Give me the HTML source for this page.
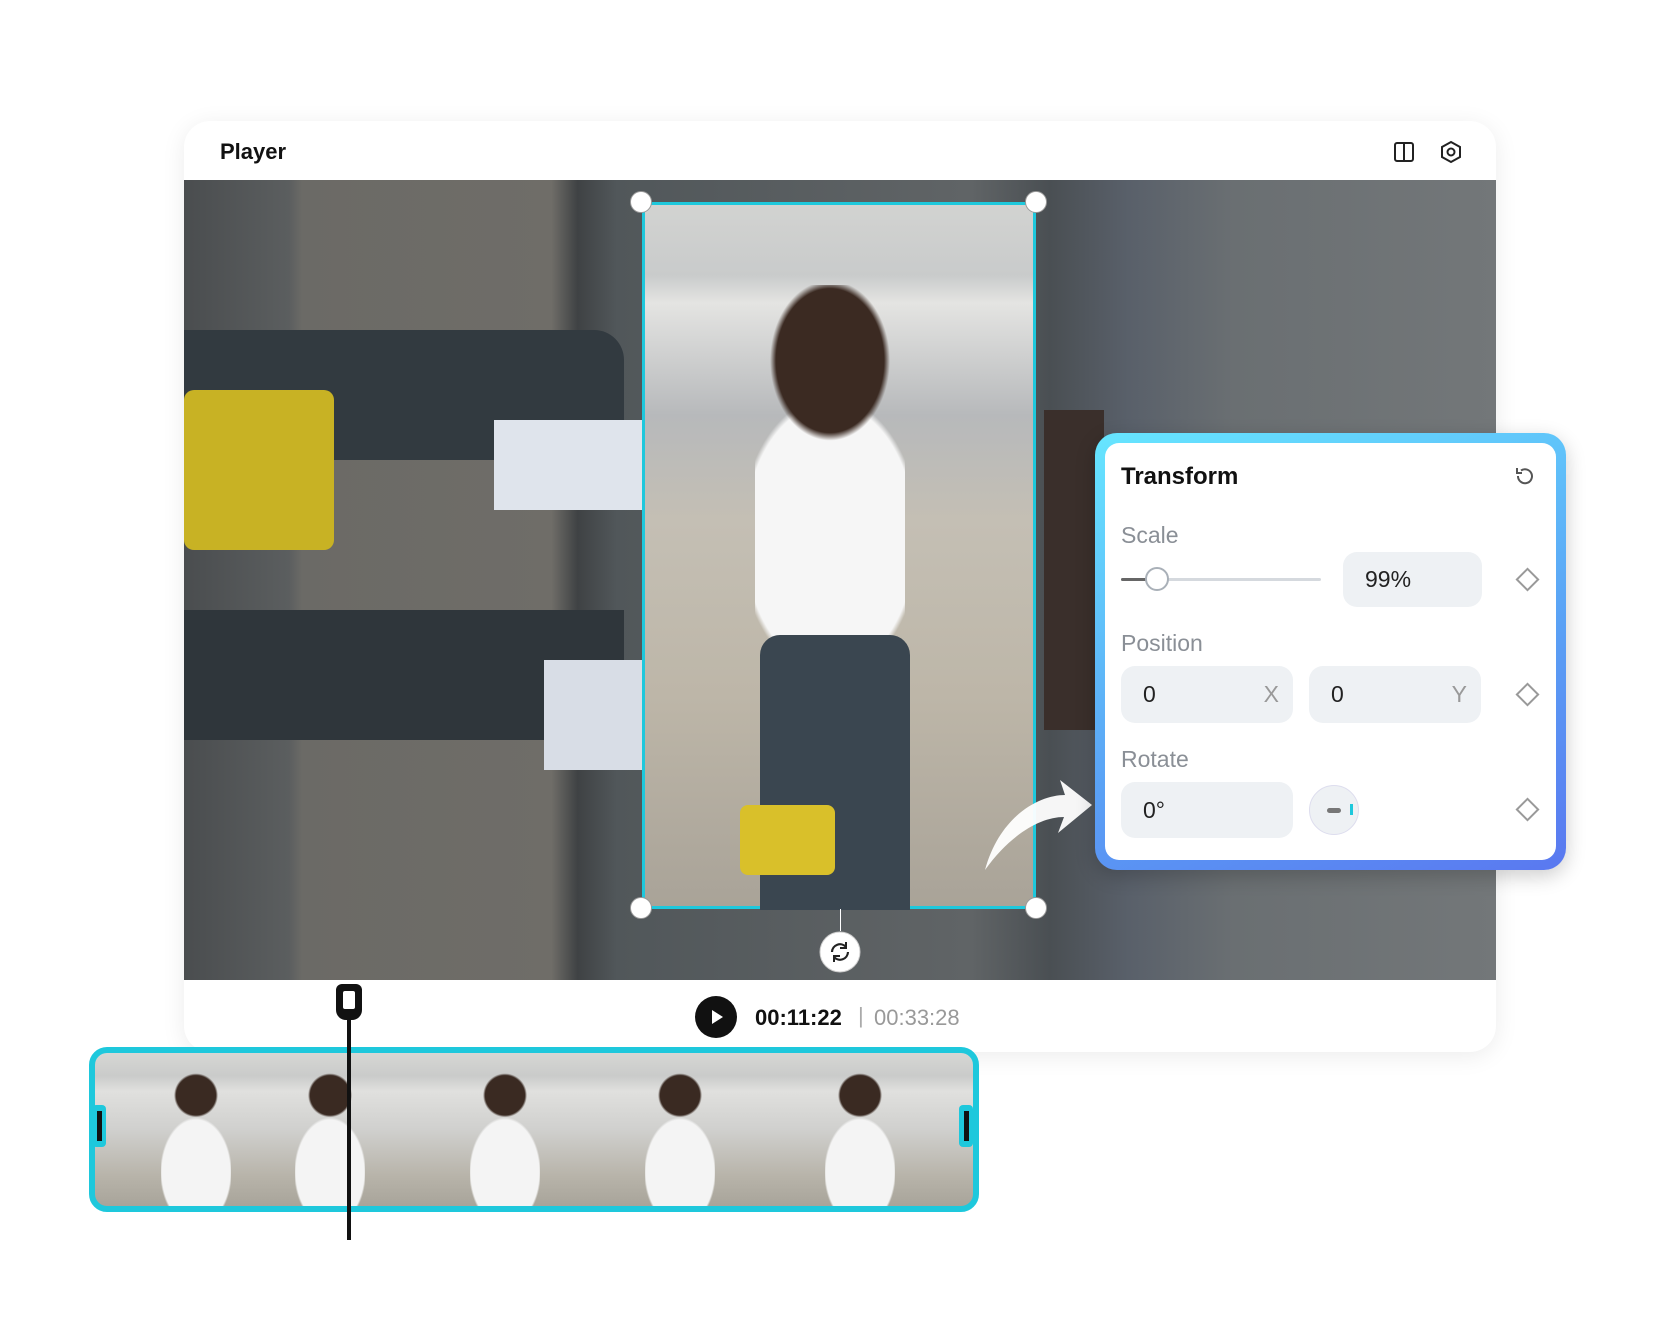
<!DOCTYPE html>
<html><head><meta charset="utf-8"><style>
*{margin:0;padding:0;box-sizing:border-box}
body{width:1680px;height:1344px;background:#fff;position:relative;overflow:hidden;font-family:"Liberation Sans",sans-serif}
.card{position:absolute;left:184px;top:121px;width:1312px;height:931px;background:#fff;border-radius:26px;box-shadow:0 4px 24px rgba(0,0,0,.08);overflow:hidden}
.title{position:absolute;left:36px;top:18px;font-size:22px;font-weight:bold;color:#111}
.scene{position:absolute;left:0;top:59px;width:1312px;height:800px;background:
linear-gradient(90deg,#4a4d4f 0,#5b5e5f 8%,#6b6a66 9%,#6f6d68 28%,#3f4244 30%,#51575a 33%,#606466 60%,#4a4f53 66%,#59606a 72%,#6a6f72 80%,#737779 100%)}
.dark{position:absolute;background:#2d3236}
.sel{position:absolute;left:642px;top:202px;width:394px;height:707px;border:3px solid #1ec8dc;background:
linear-gradient(180deg,#d2d3d1 0,#c9cbcb 10%,#e4e4e2 14%,#b7b9bb 30%,#c4bfb4 45%,#bdb6a8 70%,#a9a398 100%)}
.h{position:absolute;width:22px;height:22px;border-radius:50%;background:#fff;border:1px solid #999}
.panel{position:absolute;left:1095px;top:433px;width:471px;height:437px;border-radius:22px;background:linear-gradient(160deg,#66e6ff,#5aa0f5 60%,#5a78f0);padding:10px;box-shadow:0 6px 20px rgba(0,0,0,.2)}
.pin{width:100%;height:100%;background:#fff;border-radius:14px;position:relative}
.lbl{position:absolute;left:16px;font-size:23px;color:#8a8f96}
.inp{position:absolute;background:#eef1f4;border-radius:14px;font-size:23px;color:#222;padding-left:22px;display:flex;align-items:center}
.dia{position:absolute;width:17px;height:17px;border:2px solid #999;transform:rotate(45deg)}
.strip{position:absolute;left:89px;top:1047px;width:890px;height:165px;border:6px solid #1ec8dc;border-radius:18px;background:
linear-gradient(180deg,#d6d7d4 0,#cacbca 15%,#e0e0de 25%,#d0d0ce 50%,#b8b4aa 80%,#a8a49a 100%);overflow:hidden}
.fig{position:absolute;top:18px;width:70px;height:135px;background:radial-gradient(ellipse 22px 22px at 50% 18%,#3a2a22 90%,transparent 100%),radial-gradient(ellipse 36px 55px at 50% 75%,#f4f4f4 95%,transparent 100%)}
</style></head><body>
<div class="card">
<div class="title">Player</div>
<svg style="position:absolute;left:1209px;top:20px" width="22" height="22" viewBox="0 0 22 22"><rect x="2" y="2" width="18" height="18" rx="2" fill="none" stroke="#222" stroke-width="2"/><line x1="11" y1="2" x2="11" y2="20" stroke="#222" stroke-width="2"/></svg>
<svg style="position:absolute;left:1255px;top:19px" width="24" height="24" viewBox="0 0 24 24"><path d="M12 2 L21 7 L21 17 L12 22 L3 17 L3 7Z" fill="none" stroke="#222" stroke-width="2"/><circle cx="12" cy="12" r="3.5" fill="none" stroke="#222" stroke-width="2"/></svg>
<div class="scene">
<div class="dark" style="left:0;top:150px;width:440px;height:130px;background:#323a40;border-radius:0 30px 30px 0"></div>
<div class="dark" style="left:0;top:430px;width:440px;height:130px;background:#2f363b"></div>
<div style="position:absolute;left:0;top:210px;width:150px;height:160px;background:#c8b224;border-radius:10px"></div>
<div style="position:absolute;left:310px;top:240px;width:150px;height:90px;background:#dfe4ec"></div>
<div style="position:absolute;left:360px;top:480px;width:100px;height:110px;background:#d8dde6"></div>
<div style="position:absolute;left:860px;top:230px;width:60px;height:320px;background:#3a2f2b"></div>
</div>
<svg style="position:absolute;left:510px;top:874px" width="44" height="44"><circle cx="22" cy="22" r="21" fill="#111"/><path d="M18 15 L29 22 L18 29Z" fill="#fff"/></svg>
<div style="position:absolute;left:571px;top:884px;font-size:22px;font-weight:bold;color:#111">00:11:22</div>
<div style="position:absolute;left:674px;top:882px;font-size:22px;color:#aaa">|</div>
<div style="position:absolute;left:690px;top:884px;font-size:22px;color:#999">00:33:28</div>
</div>
<div class="sel">
<div style="position:absolute;left:110px;top:80px;width:150px;height:420px;background:radial-gradient(ellipse 60px 80px at 50% 18%,#3b2a22 90%,transparent 100%),radial-gradient(ellipse 90px 140px at 50% 60%,#f6f6f6 95%,transparent 100%)"></div>
<div style="position:absolute;left:115px;top:430px;width:150px;height:275px;background:#3a4650;border-radius:20px 20px 0 0"></div>
<div style="position:absolute;left:95px;top:600px;width:95px;height:70px;background:#d9c02a;border-radius:8px"></div>
</div>
<div class="h" style="left:630px;top:191px"></div><div class="h" style="left:1025px;top:191px"></div>
<div class="h" style="left:630px;top:897px"></div><div class="h" style="left:1025px;top:897px"></div>
<div style="position:absolute;left:840px;top:909px;width:1px;height:22px;background:#fff"></div>
<svg style="position:absolute;left:818px;top:930px" width="44" height="44"><circle cx="22" cy="22" r="20" fill="#fff" stroke="#ccc"/><path d="M14 22 A8 8 0 0 1 28 17 M30 22 A8 8 0 0 1 16 27" fill="none" stroke="#222" stroke-width="2.2"/><path d="M28 12 L28 18 L22 18" fill="none" stroke="#222" stroke-width="2"/><path d="M16 32 L16 26 L22 26" fill="none" stroke="#222" stroke-width="2"/></svg>
<svg style="position:absolute;left:980px;top:755px" width="120" height="120"><path d="M5 115 C20 60 60 40 85 40 L80 25 L112 50 L78 78 L84 62 C60 62 30 80 5 115Z" fill="#fff" opacity=".95"/></svg>
<div class="panel"><div class="pin">
<div style="position:absolute;left:16px;top:20px;font-size:24px;font-weight:bold;color:#111">Transform</div>
<svg style="position:absolute;left:408px;top:21px" width="24" height="24" viewBox="0 0 24 24"><path d="M5 12 A7 7 0 1 0 8 6.5" fill="none" stroke="#555" stroke-width="2"/><path d="M4 4 L4 9 L9 9" fill="none" stroke="#555" stroke-width="2"/></svg>
<div class="lbl" style="top:79px">Scale</div>
<div style="position:absolute;left:16px;top:135px;width:200px;height:3px;background:#d5d9de;border-radius:2px"></div>
<div style="position:absolute;left:16px;top:135px;width:40px;height:3px;background:#666;border-radius:2px"></div>
<div style="position:absolute;left:40px;top:124px;width:24px;height:24px;border-radius:50%;background:#fff;border:2px solid #a9b0b8"></div>
<div class="inp" style="left:238px;top:109px;width:139px;height:55px">99%</div>
<div class="dia" style="left:414px;top:128px"></div>
<div class="lbl" style="top:187px">Position</div>
<div class="inp" style="left:16px;top:223px;width:172px;height:57px">0<span style="position:absolute;right:14px;color:#999">X</span></div>
<div class="inp" style="left:204px;top:223px;width:172px;height:57px">0<span style="position:absolute;right:14px;color:#999">Y</span></div>
<div class="dia" style="left:414px;top:243px"></div>
<div class="lbl" style="top:303px">Rotate</div>
<div class="inp" style="left:16px;top:339px;width:172px;height:56px">0°</div>
<div style="position:absolute;left:204px;top:342px;width:50px;height:50px;border-radius:50%;background:#eef1f4;border:1px solid #dde"></div>
<div style="position:absolute;left:222px;top:365px;width:14px;height:5px;border-radius:3px;background:#777"></div>
<div style="position:absolute;left:245px;top:361px;width:3px;height:11px;background:#1ec8dc"></div>
<div class="dia" style="left:414px;top:358px"></div>
</div></div>
<div class="strip">
<div class="fig" style="left:66px"></div><div class="fig" style="left:200px"></div><div class="fig" style="left:375px"></div><div class="fig" style="left:550px"></div><div class="fig" style="left:730px"></div>
</div>
<div style="position:absolute;left:92px;top:1105px;width:14px;height:42px;background:#1ec8dc;border-radius:4px"></div><div style="position:absolute;left:97px;top:1111px;width:5px;height:30px;background:#111"></div>
<div style="position:absolute;left:959px;top:1105px;width:14px;height:42px;background:#1ec8dc;border-radius:4px"></div><div style="position:absolute;left:964px;top:1111px;width:5px;height:30px;background:#111"></div>
<div style="position:absolute;left:347px;top:990px;width:4px;height:250px;background:#111"></div>
<div style="position:absolute;left:336px;top:984px;width:26px;height:36px;background:#111;border-radius:6px 6px 10px 10px"></div>
<div style="position:absolute;left:343px;top:991px;width:12px;height:18px;background:#fff;border-radius:2px"></div>
</body></html>
